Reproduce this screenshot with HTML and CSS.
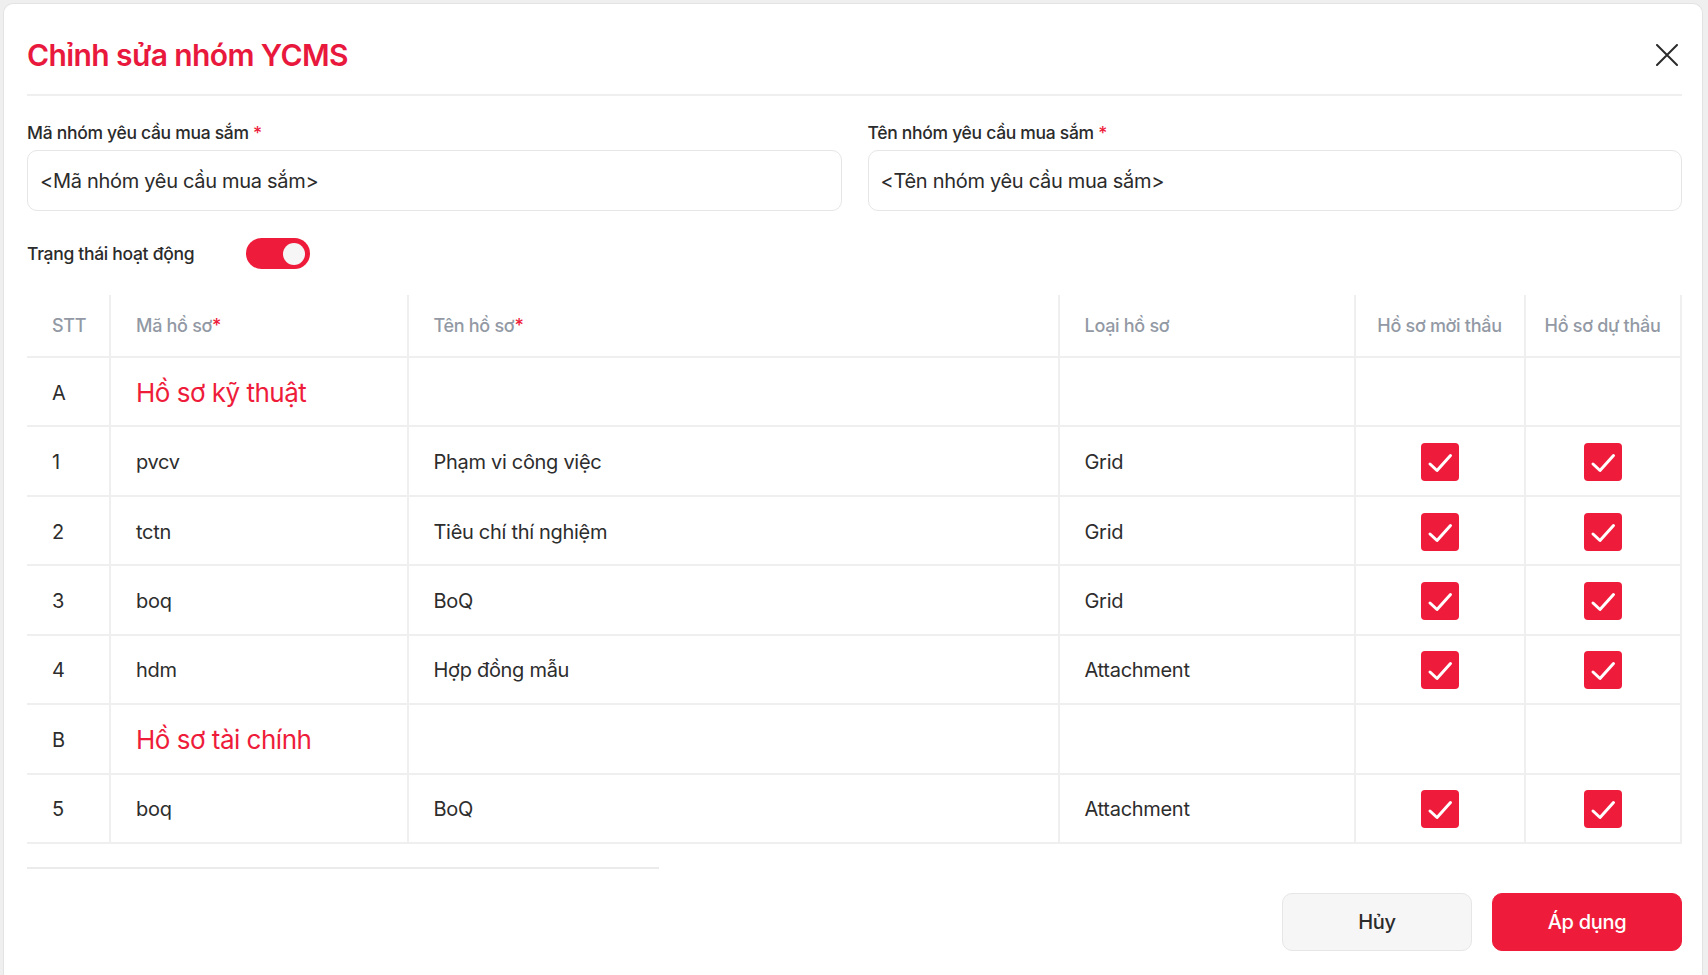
FILE: index.html
```html
<!DOCTYPE html>
<html lang="vi">
<head>
<meta charset="utf-8">
<title>Chỉnh sửa nhóm YCMS</title>
<link rel="stylesheet" href="styles.css">
</head>
<body>
<div class="modal">
  <div class="modal-header">
    <h1 class="title">Chỉnh sửa nhóm YCMS</h1>
    <button class="close" aria-label="Đóng">
      <svg width="22" height="22" viewBox="0 0 22 22"><path d="M1 1 L21 21 M21 1 L1 21" stroke="#2b2b2b" stroke-width="2" stroke-linecap="round" fill="none"/></svg>
    </button>
  </div>

  <div class="form-row">
    <div class="field">
      <label class="label">Mã nhóm yêu cầu mua sắm <span class="req">*</span></label>
      <div class="input">&lt;Mã nhóm yêu cầu mua sắm&gt;</div>
    </div>
    <div class="field">
      <label class="label">Tên nhóm yêu cầu mua sắm <span class="req">*</span></label>
      <div class="input">&lt;Tên nhóm yêu cầu mua sắm&gt;</div>
    </div>
  </div>

  <div class="status-row">
    <span class="status-label">Trạng thái hoạt động</span>
    <span class="toggle"><span class="knob"></span></span>
  </div>

  <div class="grid">
    <div class="cell head">STT</div>
    <div class="cell head">Mã hồ sơ<span class="req">*</span></div>
    <div class="cell head">Tên hồ sơ<span class="req">*</span></div>
    <div class="cell head">Loại hồ sơ</div>
    <div class="cell head center">Hồ sơ mời thầu</div>
    <div class="cell head center">Hồ sơ dự thầu</div>

    <div class="cell">A</div>
    <div class="cell section">Hồ sơ kỹ thuật</div>
    <div class="cell"></div>
    <div class="cell"></div>
    <div class="cell"></div>
    <div class="cell"></div>

    <div class="cell">1</div>
    <div class="cell">pvcv</div>
    <div class="cell">Phạm vi công việc</div>
    <div class="cell">Grid</div>
    <div class="cell center"><span class="check"><svg viewBox="0 0 38 38"><path d="M9 21 L16 27.5 L29.5 12.5" /></svg></span></div>
    <div class="cell center"><span class="check"><svg viewBox="0 0 38 38"><path d="M9 21 L16 27.5 L29.5 12.5" /></svg></span></div>

    <div class="cell">2</div>
    <div class="cell">tctn</div>
    <div class="cell">Tiêu chí thí nghiệm</div>
    <div class="cell">Grid</div>
    <div class="cell center"><span class="check"><svg viewBox="0 0 38 38"><path d="M9 21 L16 27.5 L29.5 12.5" /></svg></span></div>
    <div class="cell center"><span class="check"><svg viewBox="0 0 38 38"><path d="M9 21 L16 27.5 L29.5 12.5" /></svg></span></div>

    <div class="cell">3</div>
    <div class="cell">boq</div>
    <div class="cell">BoQ</div>
    <div class="cell">Grid</div>
    <div class="cell center"><span class="check"><svg viewBox="0 0 38 38"><path d="M9 21 L16 27.5 L29.5 12.5" /></svg></span></div>
    <div class="cell center"><span class="check"><svg viewBox="0 0 38 38"><path d="M9 21 L16 27.5 L29.5 12.5" /></svg></span></div>

    <div class="cell">4</div>
    <div class="cell">hdm</div>
    <div class="cell">Hợp đồng mẫu</div>
    <div class="cell">Attachment</div>
    <div class="cell center"><span class="check"><svg viewBox="0 0 38 38"><path d="M9 21 L16 27.5 L29.5 12.5" /></svg></span></div>
    <div class="cell center"><span class="check"><svg viewBox="0 0 38 38"><path d="M9 21 L16 27.5 L29.5 12.5" /></svg></span></div>

    <div class="cell">B</div>
    <div class="cell section">Hồ sơ tài chính</div>
    <div class="cell"></div>
    <div class="cell"></div>
    <div class="cell"></div>
    <div class="cell"></div>

    <div class="cell">5</div>
    <div class="cell">boq</div>
    <div class="cell">BoQ</div>
    <div class="cell">Attachment</div>
    <div class="cell center"><span class="check"><svg viewBox="0 0 38 38"><path d="M9 21 L16 27.5 L29.5 12.5" /></svg></span></div>
    <div class="cell center"><span class="check"><svg viewBox="0 0 38 38"><path d="M9 21 L16 27.5 L29.5 12.5" /></svg></span></div>
  </div>

  <div class="scrollbar"></div>

  <div class="footer">
    <button class="btn btn-cancel">Hủy</button>
    <button class="btn btn-apply">Áp dụng</button>
  </div>
</div>
</body>
</html>
```

FILE: styles.css
```css
* { box-sizing: border-box; }

html, body {
  margin: 0;
  height: 100%;
}

body {
  background: #efefef;
  padding: 3px 5px 0 3px;
  font-family: "Inter", "Noto Sans", "Liberation Sans", sans-serif;
  color: #2d2d2d;
  overflow: hidden;
}

.modal {
  background: #fff;
  border: 1px solid #e3e3e3;
  border-bottom: none;
  border-radius: 10px 10px 0 0;
  min-height: 100%;
  padding: 0 20px 0 23px;
}

.modal-header {
  height: 92px;
  padding-top: 11px;
  display: flex;
  align-items: center;
  justify-content: space-between;
  border-bottom: 2px solid #efefef;
}

.title {
  margin: 0;
  font-size: 30px;
  font-weight: 600;
  letter-spacing: -0.6px;
  color: #e8193c;
}

.close {
  border: none;
  background: none;
  padding: 0;
  margin-right: 4px;
  width: 22px;
  height: 22px;
  display: flex;
  cursor: pointer;
}

.form-row {
  display: flex;
  gap: 26px;
  margin-top: 27px;
}

.field {
  flex: 1;
  display: flex;
  flex-direction: column;
  gap: 7px;
}

.label {
  font-size: 17.5px;
  line-height: 20px;
  font-weight: 500;
  letter-spacing: -0.3px;
  color: #2b2b2b;
}

.req { color: #ee1c3a; }

.input {
  height: 61px;
  border: 1px solid #e6e6e6;
  border-radius: 10px;
  padding: 0 12px;
  display: flex;
  align-items: center;
  font-size: 20px;
  letter-spacing: -0.3px;
  color: #2b2b2b;
}

.status-row {
  display: flex;
  align-items: center;
  margin-top: 27px;
  height: 31px;
}

.status-label {
  width: 219px;
  font-size: 17.5px;
  font-weight: 500;
  letter-spacing: -0.3px;
  color: #2b2b2b;
}

.toggle {
  width: 64px;
  height: 31px;
  border-radius: 16px;
  background: #ee1c3a;
  display: flex;
  align-items: center;
  justify-content: flex-end;
  padding-right: 5px;
}

.knob {
  width: 22px;
  height: 22px;
  border-radius: 50%;
  background: #f6f6f6;
}

.grid {
  margin-top: 26px;
  display: grid;
  grid-template-columns: 84px 297.5px 651px 296px 170px 156px;
  grid-template-rows: 63px repeat(7, 69.45px);
}

.cell {
  display: flex;
  align-items: center;
  padding-left: 25px;
  padding-top: 2px;
  border-bottom: 2px solid #efefef;
  border-right: 2px solid #efefef;
  font-size: 20px;
  letter-spacing: -0.3px;
  color: #2d2d2d;
}

.cell.head {
  font-size: 18px;
  font-weight: 500;
  color: #9299a4;
  padding-top: 0;
}

.cell.center {
  justify-content: center;
  padding-left: 0;
}

.cell.section {
  font-size: 26px;
  color: #ee1c3a;
  letter-spacing: -0.5px;
}

.check {
  width: 38px;
  height: 38px;
  border-radius: 4px;
  background: #ee1c3a;
  display: flex;
}

.check svg {
  width: 38px;
  height: 38px;
}

.check path {
  fill: none;
  stroke: #fff;
  stroke-width: 3;
  stroke-linecap: round;
  stroke-linejoin: round;
}

.scrollbar {
  margin-top: 23px;
  width: 632px;
  height: 2px;
  background: #ebebeb;
}

.footer {
  margin-top: 24px;
  display: flex;
  justify-content: flex-end;
  gap: 20px;
}

.btn {
  width: 190px;
  height: 58px;
  border-radius: 10px;
  font-family: inherit;
  font-size: 20px;
  font-weight: 500;
  letter-spacing: -0.3px;
  cursor: pointer;
}

.btn-cancel {
  background: #f6f6f6;
  border: 1px solid #e6e6e6;
  color: #2b2b2b;
}

.btn-apply {
  background: #ee1c3a;
  border: 1px solid #ee1c3a;
  color: #fff;
}
```
